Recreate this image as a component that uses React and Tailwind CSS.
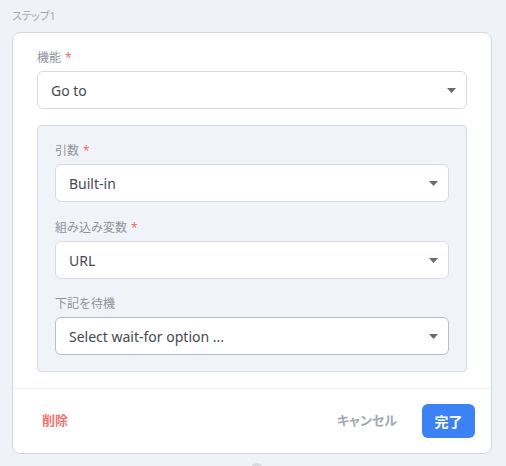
import React from 'react';

const Caret = () => (
  <svg width="9" height="5" viewBox="0 0 9 5" className="shrink-0">
    <path d="M0 0 H9 L4.5 5 Z" fill="#6b6b6b" />
  </svg>
);

const Select = ({ value, dark }) => (
  <div
    className={`h-[38px] flex items-center justify-between pl-[13px] pr-[10px] bg-white rounded-md border ${
      dark ? 'border-[#b4bdca]' : 'border-[#d3dbe6]'
    }`}
  >
    <span className="text-[14px] text-[#454a52]">{value}</span>
    <Caret />
  </div>
);

const Field = ({ label, required, value, dark, className = '' }) => (
  <div className={className}>
    <div className="text-[12px] leading-[16px] text-[#8f949c] mb-[5px]">
      {label}
      {required && <span className="text-[#f26b6b] ml-[4px]">*</span>}
    </div>
    <Select value={value} dark={dark} />
  </div>
);

export default function App() {
  return (
    <div
      className="h-[466px] overflow-hidden bg-[#eff2f7] px-[12px] pt-[8px]"
      style={{ fontFamily: '"Noto Sans", "Noto Sans CJK JP", sans-serif' }}
    >
      <div className="text-[11px] leading-[16px] text-[#a3a8b0] tracking-tight [font-feature-settings:'palt']">ステップ1</div>
      <div className="mt-[8px] w-[480px] bg-white border border-[#cfd8e4] rounded-lg">
        <div className="px-[24px] pt-[17px] pb-[16px]">
          <Field label="機能" required value="Go to" />
          <div className="mt-[16px] bg-[#f0f3f8] border border-[#d3dbe6] rounded px-[17px] pt-[17px] pb-[16px]">
            <Field label="引数" required value="Built-in" />
            <Field className="mt-[18px]" label="組み込み変数" required value="URL" />
            <Field className="mt-[17px]" label="下記を待機" value="Select wait-for option ..." dark />
          </div>
        </div>
        <div className="border-t border-[#eceff3] h-[65px] flex items-center pl-[29px] pr-[16px] [font-feature-settings:'palt']">
          <button className="text-[13px] font-bold text-[#f27373]">削除</button>
          <button className="ml-auto text-[13px] font-bold text-[#a3a8b2] mr-[25px]">キャンセル</button>
          <button className="h-[34px] w-[53px] rounded-md bg-[#3b82f6] text-white text-[14px] font-bold">完了</button>
        </div>
      </div>
      <div className="mx-auto mt-[9px] w-[12px] h-[12px] rounded-full bg-[#d5dae1] translate-x-[4px]" />
    </div>
  );
}
